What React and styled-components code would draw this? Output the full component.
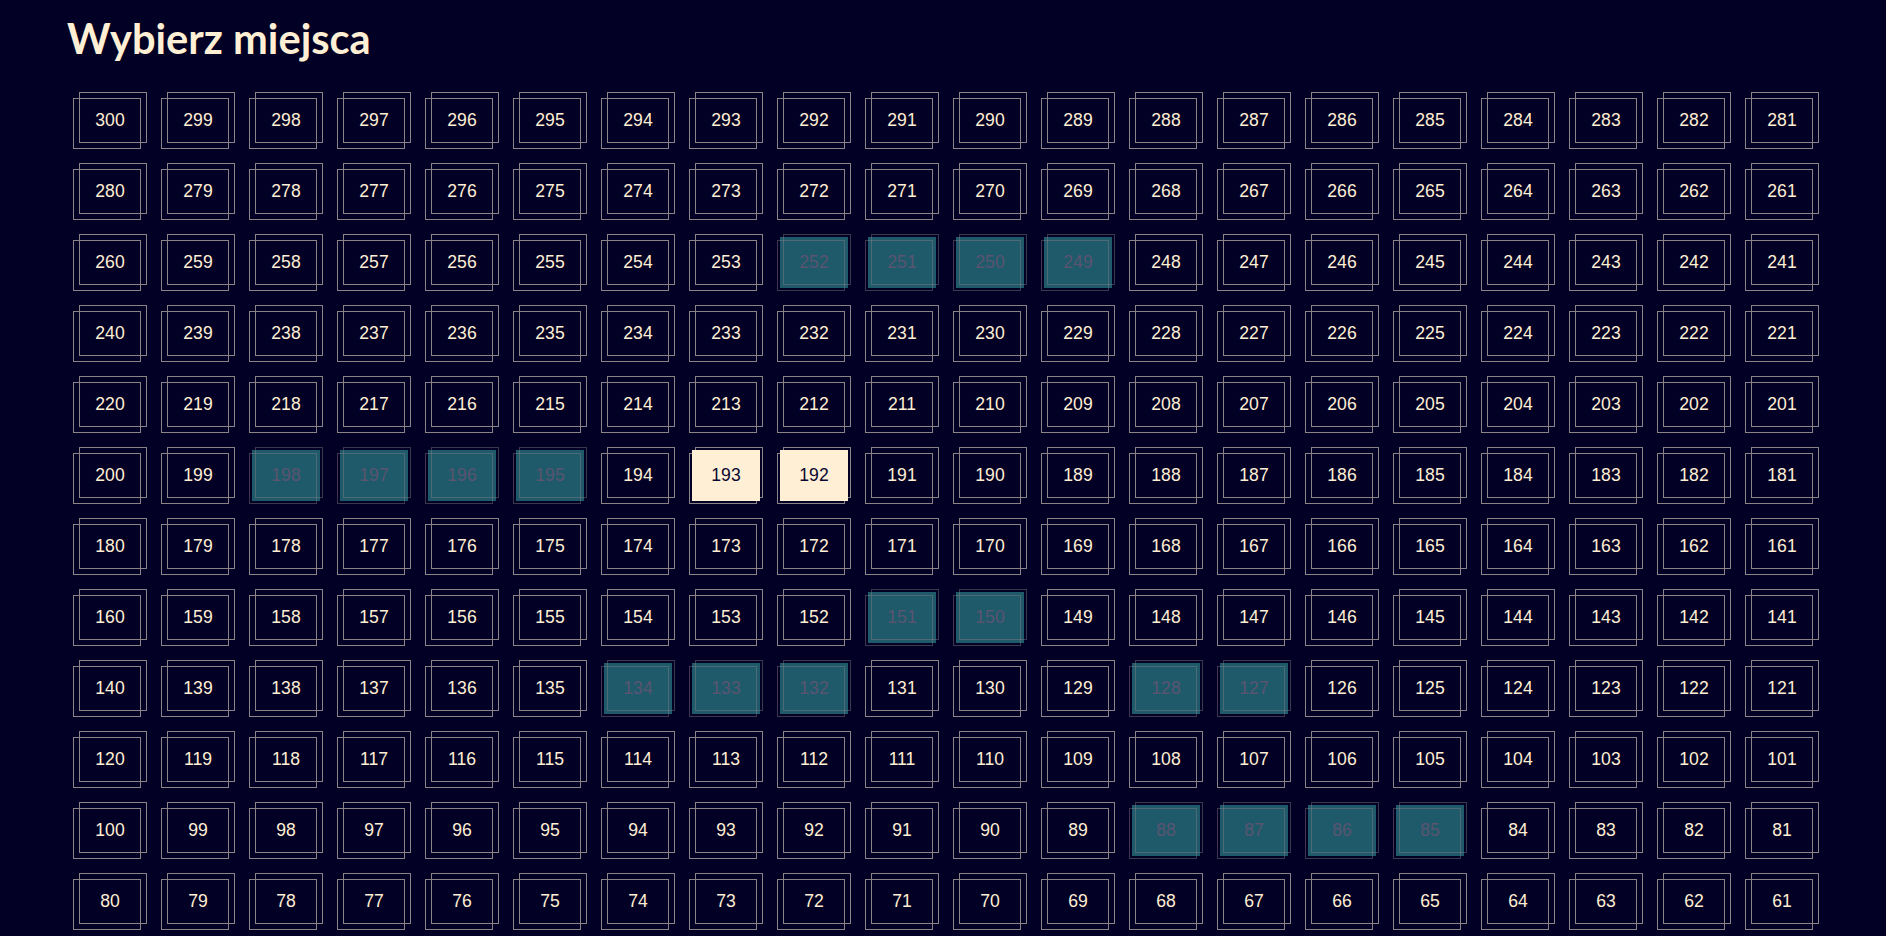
import React from "react";
import styled, { createGlobalStyle, css } from "styled-components";

const GlobalStyle = createGlobalStyle`
  html, body {
    margin: 0;
    padding: 0;
    background: #020024;
  }
  body {
    font-family: "Liberation Sans", Arial, sans-serif;
    color: #ffefd5;
  }
`;

const Page = styled.main`
  padding: 14px 0 40px 67px;
`;

const Title = styled.h1`
  margin: 0 0 33px 0;
  font-family: "Lato", "Open Sans", sans-serif;
  font-weight: 700;
  font-size: 41.6px;
  line-height: 48px;
  color: #ffefd5;
`;

const Grid = styled.div`
  margin-left: 9px;
  display: grid;
  grid-template-columns: repeat(20, 68px);
  column-gap: 20px;
  row-gap: 20px;
`;

const Seat = styled.div`
  position: relative;
  width: 68px;
  height: 51px;
`;

const Frame = styled.span`
  position: absolute;
  inset: 0;
  box-sizing: border-box;
  border: 1px solid #8b8385;
  transform: translate(${(p) => p.$dx}px, ${(p) => p.$dy}px);
  z-index: ${(p) => (p.$state === "reserved" ? 2 : 0)};
  ${(p) =>
    p.$state === "reserved" &&
    css`
      border-color: rgba(139, 131, 133, 0.42);
    `}
`;

const Face = styled.div`
  position: absolute;
  inset: 0;
  z-index: 1;
  display: flex;
  align-items: center;
  justify-content: center;
  font-family: "Liberation Sans", Arial, sans-serif;
  font-size: 17.6px;
  color: #ffefd5;
  padding-bottom: 1px;
  box-sizing: border-box;
  ${(p) =>
    p.$state === "reserved" &&
    css`
      background: #1f5a6b;
      color: #5a5470;
    `}
  ${(p) =>
    p.$state === "selected" &&
    css`
      background: #ffefd5;
      color: #0a0830;
    `}
`;

const reserved = new Set([
  252, 251, 250, 249, 198, 197, 196, 195, 151, 150, 134, 133, 132, 128, 127,
  88, 87, 86, 85,
]);
const selected = new Set([193, 192]);

const seats = Array.from({ length: 300 }, (_, i) => 300 - i);

export default function App() {
  return (
    <>
      <GlobalStyle />
      <Page>
        <Title>Wybierz miejsca</Title>
        <Grid>
          {seats.map((n) => {
            const state = selected.has(n)
              ? "selected"
              : reserved.has(n)
              ? "reserved"
              : "free";
            return (
              <Seat key={n}>
                <Frame $dx={-3} $dy={3} $state={state} />
                <Frame $dx={3} $dy={-3} $state={state} />
                <Face $state={state}>{n}</Face>
              </Seat>
            );
          })}
        </Grid>
      </Page>
    </>
  );
}
